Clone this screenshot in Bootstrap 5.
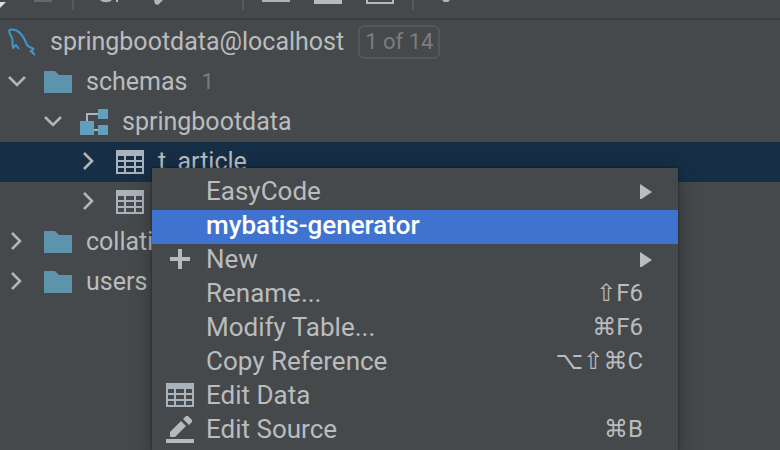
<!DOCTYPE html>
<html lang="en">
<head>
<meta charset="utf-8">
<meta name="viewport" content="width=device-width, initial-scale=1">
<title>Database</title>
<link rel="stylesheet" href="https://cdn.jsdelivr.net/npm/bootstrap@5.3.0/dist/css/bootstrap.min.css">
<style>
body { background: #45494b; color: #bbbcbd; font-family: Roboto, "DejaVu Sans", sans-serif; font-size: 25px; line-height: 34px; }
svg { display: block; flex: none; }
.panel { min-height: 100vh; }
.toolbar { height: 20px; border-bottom: 2px solid #393b3c; }
.tool { width: 52px; height: 18px; }
.tool-edge { width: 14px; height: 18px; }
.tool-sep { width: 14px; height: 10px; }
.tool-sep::before { content: ""; width: 2px; height: 100%; background: #56595b; }
.tool-gap { margin-right: 52px; }
.tree { padding-top: 2px; }
.node { height: 40px; gap: 14px; line-height: 40px; }
.level-0 { padding-left: 8px; }
.level-1 { padding-left: 8px; }
.level-2 { padding-left: 44px; }
.level-3 { padding-left: 80px; }
.twisty { width: 20px; margin-right: 2px; }
.node-active { background: #162f47; }
.counter { color: #7b7d7e; font-size: 22px; }
.badge-count { border: 2px solid #55585a; border-radius: 6px; padding: 0 5px; line-height: 30px; }
.popup { top: 168px; left: 152px; width: 526px; padding: 8px 0; background: #45494b; font-size: 26px; box-shadow: 0 4px 20px rgba(0, 0, 0, .3), 0 0 2px rgba(0, 0, 0, .5); }
.entry { height: 34px; padding: 0 35px 4px 14px; gap: 12px; }
.entry-sub { padding-right: 26px; }
.entry-icon { width: 28px; }
.entry-active { background: #4073cf; color: #fff; font-weight: 500; }
.keys { font-size: 24px; }
</style>
<script src="https://cdn.jsdelivr.net/npm/bootstrap@5.3.0/dist/js/bootstrap.bundle.min.js"></script>
</head>
<body class="overflow-hidden">
<svg class="d-none" aria-hidden="true">
  <symbol id="folder" viewBox="0 0 28 22"><path fill="#5d93ab" d="M0 0h11l4 4h13v18H0z"/></symbol>
  <symbol id="grid" viewBox="0 0 28 24"><path fill="#a9b3bc" fill-rule="evenodd" d="M0 0h28v24H0zM2 6v4h6V6zM10 6v4h8V6zM20 6v4h6V6zM2 12v4h6v-4zM10 12v4h8v-4zM20 12v4h6v-4zM2 18v4h6v-4zM10 18v4h8v-4zM20 18v4h6v-4z"/></symbol>
  <symbol id="open" viewBox="0 0 20 20"><path fill="none" stroke="#b2b4b5" stroke-width="2.6" d="M1 5l8 8 8-8"/></symbol>
  <symbol id="closed" viewBox="0 0 20 20"><path fill="none" stroke="#b2b4b5" stroke-width="2.6" d="M4 1l8 8-8 8"/></symbol>
</svg>
<main class="panel position-relative overflow-hidden">
  <div class="toolbar d-flex" role="toolbar" aria-label="Database tools">
    <button class="tool-edge btn p-0 border-0 rounded-0" aria-label="Add"><svg width="14" height="18"><path fill="#dcddde" d="M0 2h6L0 8z"/></svg></button>
    <button class="tool btn p-0 border-0 rounded-0" aria-label="Duplicate"><svg width="52" height="18"><path fill="#66696b" d="M20 0h18v2H20z"/></svg></button>
    <span class="tool-sep d-flex justify-content-center"></span>
    <button class="tool btn p-0 border-0 rounded-0" aria-label="Refresh"><svg width="52" height="18"><path fill="#b2b4b5" d="M20 0h12c-3 3-9 3-12 0zM36 0h2v2h-2z"/></svg></button>
    <button class="tool tool-gap btn p-0 border-0 rounded-0" aria-label="Properties"><svg width="52" height="18"><path fill="#b2b4b5" d="M22 0h9l-5 5-3-1z"/></svg></button>
    <span class="tool-sep d-flex justify-content-center"></span>
    <button class="tool btn p-0 border-0 rounded-0" aria-label="Table"><svg width="52" height="18"><path fill="#a9b3bc" d="M12 0h28v2H12z"/></svg></button>
    <button class="tool btn p-0 border-0 rounded-0" aria-label="Edit"><svg width="52" height="18"><path fill="#b8b9ba" d="M12 0h28v4H12z"/></svg></button>
    <button class="tool btn p-0 border-0 rounded-0" aria-label="Console"><svg width="52" height="18"><path fill="#b8b9ba" d="M12 0h2v2h24V0h2v4H12z"/></svg></button>
    <span class="tool-sep d-flex justify-content-center"></span>
    <button class="tool btn p-0 border-0 rounded-0" aria-label="Filter"><svg width="52" height="18"><path fill="#b2b4b5" d="M22 0h8l-2 2h-4z"/></svg></button>
  </div>

  <ul class="tree list-unstyled mb-0" role="tree" aria-label="Data sources">
    <li class="node level-0 d-flex align-items-center" role="treeitem">
      <svg width="28" height="28" viewBox="0 0 28 28" fill="none" stroke="#4396cc" stroke-width="2" stroke-linejoin="round"><path d="M1 2c4-1 7-1 11 3 4 4 5 7 7 12 2 2 4 3 7 4M1 2c0 3 1 5 3 8 1 3 0 6 1 10l3-3 3 4M26 21l-3 2 4 4M22 23l3 1"/></svg>
      <span>springbootdata@localhost</span>
      <span class="counter badge-count">1 of 14</span>
    </li>
    <li class="node level-1 d-flex align-items-center" role="treeitem" aria-expanded="true">
      <button class="twisty btn p-0 border-0" aria-label="Collapse schemas"><svg width="20" height="20"><use href="#open"/></svg></button>
      <svg width="28" height="22"><use href="#folder"/></svg>
      <span>schemas</span><span class="counter">1</span>
    </li>
    <li class="node level-2 d-flex align-items-center" role="treeitem" aria-expanded="true">
      <button class="twisty btn p-0 border-0" aria-label="Collapse springbootdata"><svg width="20" height="20"><use href="#open"/></svg></button>
      <svg width="28" height="26" viewBox="0 0 28 26"><path fill="none" stroke="#a9b3bc" stroke-width="2" d="M7 12V5h12M13 21h6"/><path fill="#609fbd" d="M18 0h10v10H18zM0 12h14v14H0zM18 16h10v10H18z"/></svg>
      <span>springbootdata</span>
    </li>
    <li class="node node-active level-3 d-flex align-items-center" role="treeitem" aria-selected="true">
      <button class="twisty btn p-0 border-0" aria-label="Expand t_article"><svg width="20" height="20"><use href="#closed"/></svg></button>
      <svg width="28" height="24"><use href="#grid"/></svg>
      <span>t_article</span>
    </li>
    <li class="node level-3 d-flex align-items-center" role="treeitem">
      <button class="twisty btn p-0 border-0" aria-label="Expand table"><svg width="20" height="20"><use href="#closed"/></svg></button>
      <svg width="28" height="24"><use href="#grid"/></svg>
    </li>
    <li class="node level-1 d-flex align-items-center" role="treeitem">
      <button class="twisty btn p-0 border-0" aria-label="Expand collations"><svg width="20" height="20"><use href="#closed"/></svg></button>
      <svg width="28" height="22"><use href="#folder"/></svg>
      <span>collations</span>
    </li>
    <li class="node level-1 d-flex align-items-center" role="treeitem">
      <button class="twisty btn p-0 border-0" aria-label="Expand users"><svg width="20" height="20"><use href="#closed"/></svg></button>
      <svg width="28" height="22"><use href="#folder"/></svg>
      <span>users</span>
    </li>
  </ul>

  <div class="popup position-absolute" role="menu">
    <button class="entry entry-sub d-flex align-items-center w-100 border-0 bg-transparent text-reset text-start" role="menuitem">
      <span class="entry-icon"></span><span class="flex-grow-1">EasyCode</span>
      <svg width="14" height="16"><path fill="#bbbcbd" d="M2 1l12 8-12 8z"/></svg>
    </button>
    <button class="entry entry-active d-flex align-items-center w-100 border-0 text-start" role="menuitem">
      <span class="entry-icon"></span><span>mybatis-generator</span>
    </button>
    <button class="entry entry-sub d-flex align-items-center w-100 border-0 bg-transparent text-reset text-start" role="menuitem">
      <svg width="28" height="20"><path fill="#b8b9ba" d="M12 0h4v8h8v4h-8v8h-4v-8H4V8h8z"/></svg><span class="flex-grow-1">New</span>
      <svg width="14" height="16"><path fill="#bbbcbd" d="M2 1l12 8-12 8z"/></svg>
    </button>
    <button class="entry d-flex align-items-center w-100 border-0 bg-transparent text-reset text-start" role="menuitem">
      <span class="entry-icon"></span><span class="flex-grow-1">Rename...</span><span class="keys">⇧F6</span>
    </button>
    <button class="entry d-flex align-items-center w-100 border-0 bg-transparent text-reset text-start" role="menuitem">
      <span class="entry-icon"></span><span class="flex-grow-1">Modify Table...</span><span class="keys">⌘F6</span>
    </button>
    <button class="entry d-flex align-items-center w-100 border-0 bg-transparent text-reset text-start" role="menuitem">
      <span class="entry-icon"></span><span class="flex-grow-1">Copy Reference</span><span class="keys">⌥⇧⌘C</span>
    </button>
    <button class="entry d-flex align-items-center w-100 border-0 bg-transparent text-reset text-start" role="menuitem">
      <svg width="28" height="24"><use href="#grid"/></svg><span>Edit Data</span>
    </button>
    <button class="entry d-flex align-items-center w-100 border-0 bg-transparent text-reset text-start" role="menuitem">
      <svg width="28" height="28" viewBox="0 0 28 28"><path fill="#b8b9ba" d="M0 24h28v4H0zM4 22v-5L15 6l5 5-11 11zM17 4l3-3h2l4 4v2l-3 3z"/></svg><span class="flex-grow-1">Edit Source</span><span class="keys">⌘B</span>
    </button>
  </div>
</main>
</body>
</html>
